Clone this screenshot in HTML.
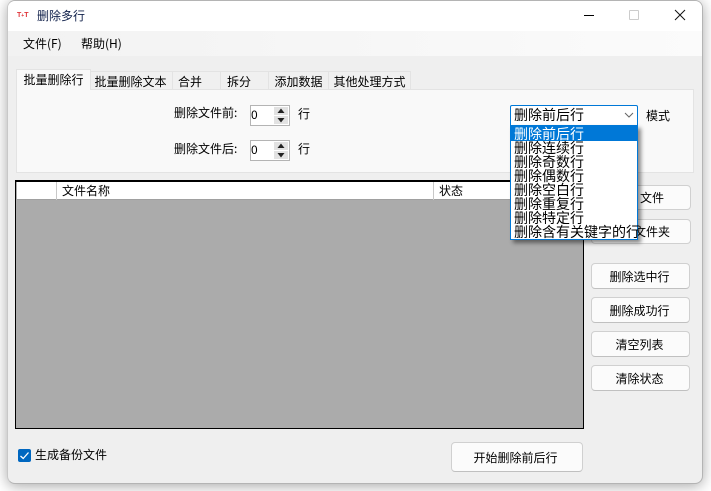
<!DOCTYPE html>
<html><head><meta charset="utf-8">
<style>
html,body{margin:0;padding:0;width:711px;height:491px;overflow:hidden;background:#fff}
body{position:relative;font-family:"WenQuanYi Zen Hei","Noto Sans CJK SC","Liberation Sans",sans-serif;font-size:12px;color:#000}
.a{position:absolute;white-space:nowrap}
#win{left:7px;top:0;width:696px;height:484px;background:#efefef;border-radius:8px;border:1px solid #b4b4b4;border-left-color:#c8c8c8;box-sizing:border-box;box-shadow:0 2px 14px rgba(0,0,0,.35);overflow:hidden}
.tab{background:#f0f0f0;border:1px solid #e3e3e3;border-bottom:none;box-sizing:border-box;top:71px;height:18px;line-height:20px;text-align:center}
.btn{background:#fbfbfb;border:1px solid #d0d0d0;border-bottom-color:#c0c0c0;border-radius:4px;box-sizing:border-box;text-align:center;padding-right:2px}
.spin{width:40px;height:21px;background:#fff;border:1px solid #b4b4b4;box-sizing:border-box}
.spin span{position:absolute;left:0;top:2px;line-height:14px}
.spin svg{position:absolute;left:0;top:0}
.it{left:3px;width:125px;height:14px;line-height:14px;font-size:14px;padding-left:0}
</style></head><body>
<div class="a" id="win"></div>
<div class="a" style="left:8px;top:1px;width:694px;height:30px;background:#fff;border-radius:7px 7px 0 0"></div>
<div class="a" style="left:8px;top:31px;width:694px;height:25px;background:linear-gradient(90deg,#f2f2f2,#fbfbfb)"></div>

<div class="a" style="left:17px;top:12px;font:bold 7px 'Liberation Sans',sans-serif;color:#e0353a;letter-spacing:0;line-height:8px">T<span style="font-size:5px">+</span>T</div>
<div class="a" style="left:37px;top:8px;line-height:16px;color:#10204a">删除多行</div>
<div class="a" style="left:584px;top:15px;width:10px;height:1px;background:#000"></div>
<div class="a" style="left:629px;top:10px;width:8px;height:8px;border:1px solid #ccc;border-radius:1px"></div>
<svg class="a" style="left:674px;top:9px" width="12" height="12"><path d="M1 1L11 11M11 1L1 11" stroke="#111" stroke-width="1" fill="none"/></svg>

<div class="a" style="left:23px;top:36px;line-height:16px">文件(F)</div>
<div class="a" style="left:81px;top:36px;line-height:16px">帮助(H)</div>

<div class="a" style="left:16px;top:89px;width:678px;height:84px;background:#f9f9f9;border:1px solid #e3e3e3;box-sizing:border-box"></div>
<div class="a" style="left:16px;top:69px;width:75px;height:21px;background:#f9f9f9;border:1px solid #e3e3e3;border-bottom:none;box-sizing:border-box;text-align:center;line-height:20px;z-index:2">批量删除行</div>
<div class="a tab" style="left:90px;width:83px;padding-right:2px">批量删除文本</div>
<div class="a tab" style="left:172px;width:49px;text-align:left;padding-left:5px">合并</div>
<div class="a tab" style="left:220px;width:49px;text-align:left;padding-left:6px">拆分</div>
<div class="a tab" style="left:268px;width:61px">添加数据</div>
<div class="a tab" style="left:328px;width:83px">其他处理方式</div>

<div class="a" style="left:174px;top:105px;line-height:16px">删除文件前:</div>
<div class="a" style="left:174px;top:141px;line-height:16px">删除文件后:</div>
<div class="a spin" style="left:250px;top:105px"><span>0</span><svg width="38" height="19"><rect x="23" y="1" width="14" height="8" fill="#e2e2e2"/><rect x="23" y="10" width="14" height="8" fill="#e2e2e2"/><path d="M30 2.500L26.500 7H33.500Z" fill="#222"/><path d="M26.500 12H33.500L30 16.500Z" fill="#222"/></svg></div>
<div class="a spin" style="left:250px;top:140px"><span>0</span><svg width="38" height="19"><rect x="23" y="1" width="14" height="8" fill="#e2e2e2"/><rect x="23" y="10" width="14" height="8" fill="#e2e2e2"/><path d="M30 2.500L26.500 7H33.500Z" fill="#222"/><path d="M26.500 12H33.500L30 16.500Z" fill="#222"/></svg></div>
<div class="a" style="left:298px;top:106px;line-height:16px">行</div>
<div class="a" style="left:298px;top:141px;line-height:16px">行</div>

<div class="a" style="left:591px;top:185px;width:100px;height:25px;background:#fbfbfb;border:1px solid #d0d0d0;border-radius:4px;box-sizing:border-box;line-height:24px;padding-left:48px">文件</div>
<div class="a" style="left:591px;top:219px;width:100px;height:25px;background:#fbfbfb;border:1px solid #d0d0d0;border-radius:4px;box-sizing:border-box;line-height:24px;padding-left:42px">文件夹</div>
<div class="a btn" style="left:591px;top:263px;width:99px;height:26px;line-height:25px">删除选中行</div>
<div class="a btn" style="left:591px;top:297px;width:99px;height:26px;line-height:25px">删除成功行</div>
<div class="a btn" style="left:591px;top:331px;width:99px;height:26px;line-height:25px">清空列表</div>
<div class="a btn" style="left:591px;top:365px;width:99px;height:26px;line-height:25px">清除状态</div>

<div class="a" style="left:15px;top:180px;width:569px;height:249px;background:#ababab;border:1px solid #000;border-top-width:2px;box-sizing:border-box"></div>
<div class="a" style="left:17px;top:182px;width:566px;height:18px;background:#fff;border-bottom:1px solid #a0a0a0;box-sizing:border-box"></div>
<div class="a" style="left:56px;top:182px;width:1px;height:18px;background:#c8c8c8"></div>
<div class="a" style="left:433px;top:182px;width:1px;height:18px;background:#c8c8c8"></div>
<div class="a" style="left:62px;top:183px;line-height:16px">文件名称</div>
<div class="a" style="left:439px;top:183px;line-height:16px">状态</div>

<div class="a" style="left:18px;top:449px;width:13px;height:13px;background:#0067c0;border-radius:2px"></div>
<svg class="a" style="left:18px;top:449px" width="13" height="13"><path d="M2.500 7L5.200 9.500L10.500 3.500" stroke="#fff" stroke-width="1.300" fill="none"/></svg>
<div class="a" style="left:35px;top:447px;line-height:16px">生成备份文件</div>
<div class="a btn" style="left:451px;top:442px;width:132px;height:30px;line-height:29px;padding-right:3px">开始删除前后行</div>

<div class="a" style="left:510px;top:105px;width:128px;height:21px;background:#fff;border:1px solid #0078d7;border-radius:2px 2px 0 0;box-sizing:border-box;font-size:14px;line-height:19px;padding-left:3px">删除前后行</div>
<svg class="a" style="left:624px;top:112px" width="10" height="7"><path d="M1 1L5 5L9 1" stroke="#666" stroke-width="1" fill="none"/></svg>
<div class="a" style="left:646px;top:108px;line-height:16px">模式</div>

<div class="a" style="left:510px;top:125px;width:128px;height:115px;background:#fff;border:1px solid #0078d7;box-sizing:border-box;box-shadow:3px 3px 4px rgba(0,0,0,.45);overflow:visible;z-index:5">
<div class="a" style="left:0;top:0;width:126px;height:15px;background:#0078d7"></div>
<div class="a it" style="top:1px;color:#fff">删除前后行</div>
<div class="a it" style="top:15px">删除连续行</div>
<div class="a it" style="top:29px">删除奇数行</div>
<div class="a it" style="top:43px">删除偶数行</div>
<div class="a it" style="top:57px">删除空白行</div>
<div class="a it" style="top:71px">删除重复行</div>
<div class="a it" style="top:85px">删除特定行</div>
<div class="a it" style="top:99px">删除含有关键字的行</div>
</div>
</body></html>
